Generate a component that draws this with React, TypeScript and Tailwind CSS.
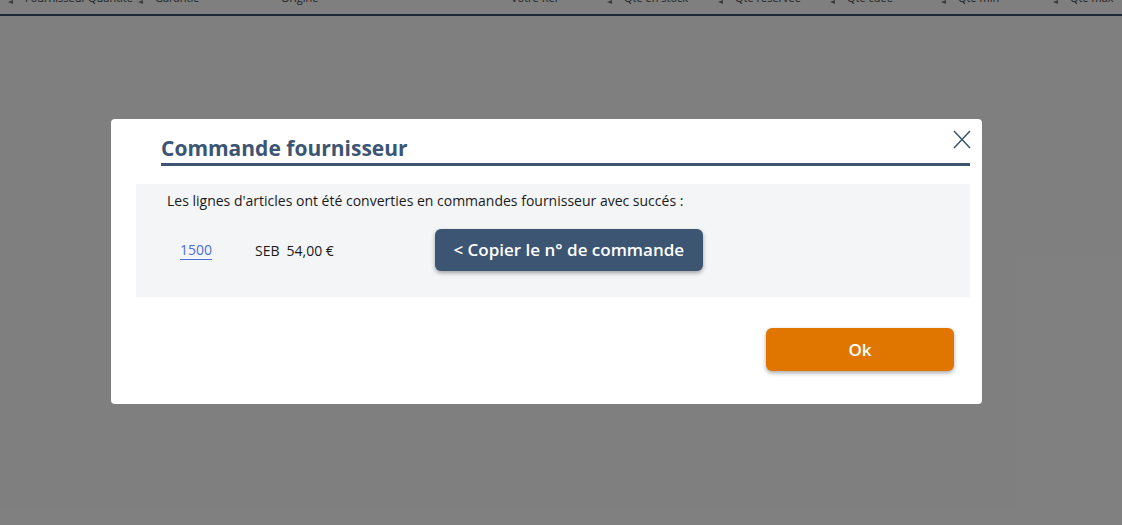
const columns = [
  { name: 'Fournisseur', left: 25, sort: true },
  { name: 'Quantité', left: 88, sort: false },
  { name: 'Garantie', left: 155, sort: true },
  { name: 'Origine', left: 281, sort: false },
  { name: 'Votre Réf', left: 511, sort: false },
  { name: 'Qté en stock', left: 624, sort: true },
  { name: 'Qté réservée', left: 735, sort: true },
  { name: 'Qté cdée', left: 847, sort: true },
  { name: 'Qté min', left: 958, sort: true },
  { name: 'Qté max', left: 1070, sort: true },
];

const font = { fontFamily: '"Open Sans", "Noto Sans", sans-serif' };

const cellStart = (c: { left: number; sort: boolean }) => (c.sort ? c.left - 17 : c.left);

export default function App() {
  return (
    <div className="relative h-[525px] w-full overflow-hidden bg-white" style={font}>
      {/* grid header, mostly scrolled off */}
      <div className="flex h-[14px] overflow-hidden text-[11px] leading-[12px] text-[#444]">
        {columns.map((c, i) => {
          const start = cellStart(c);
          const end = i + 1 < columns.length ? cellStart(columns[i + 1]) : 1122;
          return (
            <div
              key={c.name}
              className="-mt-[8px] flex shrink-0 items-start whitespace-nowrap"
              style={{ width: end - start, marginLeft: i === 0 ? start : 0 }}
            >
              {c.sort && (
                <svg width="5" height="12" viewBox="0 0 5 12" className="mr-[12px] shrink-0">
                  <path d="M5 8 L0 10 L5 12 Z" fill="#777" />
                </svg>
              )}
              <span>{c.name}</span>
            </div>
          );
        })}
      </div>
      <div className="h-[2px] bg-[#3b5573]" />

      <div className="absolute inset-0 bg-black/50 pl-[111px] pt-[119px]">
        <div className="relative flex h-[285px] w-[871px] flex-col rounded-[4px] bg-white">
          <button className="absolute right-[11px] top-[11px] text-[#3b5573]">
            <svg width="18" height="19" viewBox="0 0 18 19" fill="none" stroke="currentColor" strokeWidth="1.5">
              <path d="M1 1 L17 18 M17 1 L1 18" />
            </svg>
          </button>

          <div className="ml-[50px] mr-[12px] mt-[15px] border-b-[3px] border-[#3b5573] pb-[1px]">
            <h2 className="text-[21px] font-bold leading-[28px] text-[#3b5573]">Commande fournisseur</h2>
          </div>

          <div className="ml-[25px] mr-[12px] mt-[18px] h-[113px] bg-[#f4f5f7] pt-[7px]">
            <p className="pl-[31px] text-[14px] leading-[20px] text-[#1a1a1a]">
              Les lignes d'articles ont été converties en commandes fournisseur avec succés :
            </p>
            <div className="mt-[18px] flex items-center pl-[44px] text-[14px] text-[#1a1a1a]">
              <a className="w-[32px] border-b border-[#4a6fd6] leading-[19px] text-[#4a6fd6]">1500</a>
              <span className="ml-[43px]">SEB</span>
              <span className="ml-[7px]">54,00 €</span>
              <button className="ml-[101px] h-[42px] w-[268px] rounded-[6px] bg-[#3b5573] text-[17px] font-semibold text-white shadow-[0_2px_4px_rgba(0,0,0,0.35)]">
                &lt; Copier le n° de commande
              </button>
            </div>
          </div>

          <div className="mr-[28px] mt-[31px] flex justify-end">
            <button className="h-[43px] w-[188px] rounded-[6px] bg-[#e07600] text-[17px] font-semibold text-white shadow-[0_2px_4px_rgba(0,0,0,0.35)]">
              Ok
            </button>
          </div>
        </div>
      </div>
    </div>
  );
}
